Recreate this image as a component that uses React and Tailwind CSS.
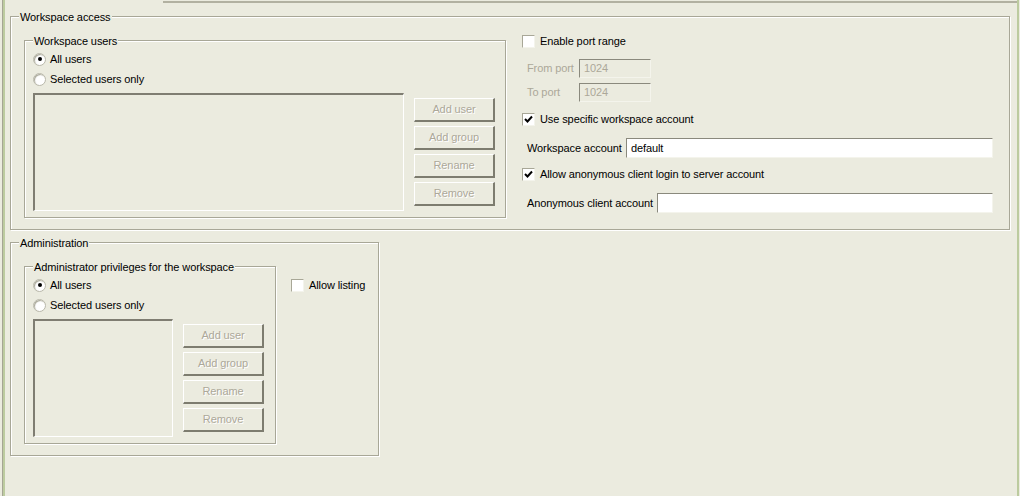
import React from 'react';

const FONT = { fontFamily: '"Liberation Sans", Arial, sans-serif' };

const GroupBox = ({ title, className, children }) => (
    <div className={`relative border border-[#a8a797] shadow-[inset_1px_1px_0_#fff,1px_1px_0_#fff] ${className}`}>
        {/* title sits on top of the border line */}
        <span className="absolute left-[8px] -top-[7px] px-[1px] bg-[#ebebdf] leading-[14px]">{title}</span>
        {children}
    </div>
);

const Radio = ({ checked, label }) => (
    <div className="flex items-center h-[20px]">
        <span className="w-[13px] h-[13px] rounded-full bg-white border border-[#b9b8aa] shadow-[inset_1px_1px_1px_#a8a797] flex items-center justify-center">
            {checked && <span className="w-[4px] h-[4px] rounded-full bg-black" />}
        </span>
        <span className="ml-[4px]">{label}</span>
    </div>
);

const Checkbox = ({ checked, label }) => (
    <div className="flex items-center h-[16px]">
        <span className="w-[13px] h-[13px] bg-white border-t border-l border-[#a8a797] border-r border-b border-r-[#f4f4ec] border-b-[#f4f4ec] flex items-center justify-center">
            {checked && (
                <svg width="9" height="9" viewBox="0 0 9 9">
                    <polyline points="1,4 3.5,6.5 8,1.5" fill="none" stroke="#000" strokeWidth="2" />
                </svg>
            )}
        </span>
        <span className="ml-[5px]">{label}</span>
    </div>
);

const Button = ({ children }) => (
    <div className="w-[81px] h-[24px] flex items-center justify-center border-t border-l border-white border-r-2 border-b-2 border-r-[#7d7c6f] border-b-[#7d7c6f] text-[#aca899] [text-shadow:1px_1px_0_#fff]">
        {children}
    </div>
);

const UserList = ({ listWidth }) => (
    <div className="px-[8px] pt-[8px]">
        <Radio checked label="All users" />
        <Radio label="Selected users only" />
        <div className="flex mt-[4px]">
            <div className={`${listWidth} h-[118px] border-t-2 border-l-2 border-[#7f7d72] border-r border-b border-r-white border-b-white`} />
            <div className="ml-[10px] mt-[5px] flex flex-col gap-[4px]">
                <Button>Add user</Button>
                <Button>Add group</Button>
                <Button>Rename</Button>
                <Button>Remove</Button>
            </div>
        </div>
    </div>
);

const TextField = ({ width, value, disabled }) => (
    <div className={`${width} ${disabled ? 'h-[19px] bg-[#ebebdf] text-[#aca899]' : 'h-[20px] bg-white text-black'} border-t border-l border-[#8a897d] border-r border-b border-r-[#f4f4ec] border-b-[#f4f4ec] flex items-center pl-[4px]`}>
        {value}
    </div>
);

export default function App() {
    return (
        <div style={FONT} className="w-[1020px] h-[496px] bg-[#ebebdf] pl-[3px] pr-[1px] text-[11px] leading-[13px] tracking-[-0.1px] text-black overflow-hidden">
            <div className="h-full border-l-2 border-r-2 border-[#bccb9f] shadow-[-1px_0_0_#a5a594]">
                {/* top edge of the tab page */}
                <div className="flex h-[3px]">
                    <div className="w-[158px]" />
                    <div className="flex-1 border-t-2 border-[#b2b1a1] mt-[1px]" />
                </div>

                <div className="pl-[5px] pr-[7px] pt-[13px]">
                    {/* Workspace access */}
                    <GroupBox title="Workspace access" className="h-[214px]">
                        <div className="flex items-start pl-[13px] pt-[16px]">
                            <GroupBox title="Workspace users" className="w-[482px] h-[178px] mt-[7px]">
                                <UserList listWidth="w-[371px]" />
                            </GroupBox>

                            <div className="ml-[16px] flex flex-col">
                                <Checkbox label="Enable port range" />
                                <div className="flex items-center mt-[10px] pl-[5px] text-[#aca899]">
                                    <span className="w-[52px]">From port</span>
                                    <TextField width="w-[72px]" value="1024" disabled />
                                </div>
                                <div className="flex items-center mt-[5px] pl-[5px] text-[#aca899]">
                                    <span className="w-[52px]">To port</span>
                                    <TextField width="w-[72px]" value="1024" disabled />
                                </div>
                                <div className="mt-[9px]">
                                    <Checkbox checked label="Use specific workspace account" />
                                </div>
                                <div className="flex items-center mt-[11px] pl-[5px]">
                                    <span className="w-[99px]">Workspace account</span>
                                    <TextField width="w-[367px]" value="default" />
                                </div>
                                <div className="mt-[8px]">
                                    <Checkbox checked label="Allow anonymous client login to server account" />
                                </div>
                                <div className="flex items-center mt-[11px] pl-[5px]">
                                    <span className="w-[130px]">Anonymous client account</span>
                                    <TextField width="w-[336px]" value="" />
                                </div>
                            </div>
                        </div>
                    </GroupBox>

                    {/* Administration */}
                    <GroupBox title="Administration" className="w-[369px] h-[214px] mt-[12px]">
                        <div className="flex items-start pl-[13px]">
                            <GroupBox title="Administrator privileges for the workspace" className="w-[252px] h-[178px] mt-[23px]">
                                <UserList listWidth="w-[140px]" />
                            </GroupBox>
                            <div className="ml-[15px] mt-[34px]">
                                <Checkbox label="Allow listing" />
                            </div>
                        </div>
                    </GroupBox>
                </div>
            </div>
        </div>
    );
}
